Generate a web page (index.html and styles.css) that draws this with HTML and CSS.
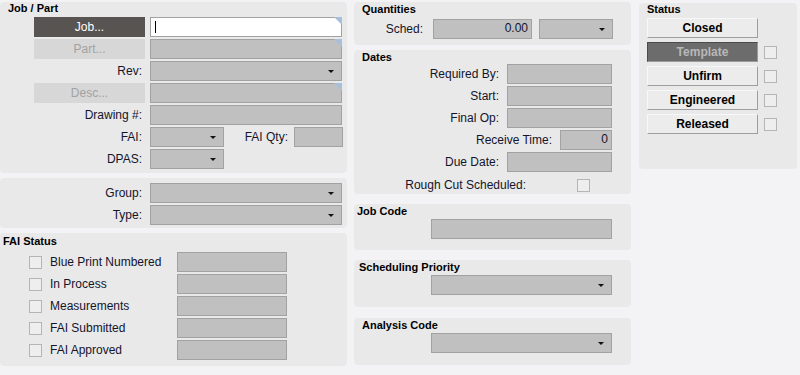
FILE: index.html
```html
<!DOCTYPE html>
<html>
<head>
<meta charset="utf-8">
<link rel="stylesheet" href="styles.css">
</head>
<body>
<div class="page">
  <div class="col col-left">
    <section class="panel p-job">
      <div class="ptitle">Job / Part</div>
      <div class="rows">
        <div class="row"><div class="lbl btn btn-dark">Job...</div><div class="field input white corner"><span class="caret"></span></div></div>
        <div class="row"><div class="lbl btn btn-dis">Part...</div><div class="field input corner"></div></div>
        <div class="row"><div class="lbl">Rev:</div><div class="field input dd"><span class="arrow"></span></div></div>
        <div class="row"><div class="lbl btn btn-dis">Desc...</div><div class="field input corner"></div></div>
        <div class="row"><div class="lbl">Drawing #:</div><div class="field input"></div></div>
        <div class="row"><div class="lbl">FAI:</div><div class="input dd w-fai"><span class="arrow"></span></div><div class="lbl-qty">FAI Qty:</div><div class="input w-qty"></div></div>
        <div class="row"><div class="lbl">DPAS:</div><div class="input dd w-fai"><span class="arrow"></span></div></div>
      </div>
    </section>
    <section class="panel p-group">
      <div class="rows">
        <div class="row"><div class="lbl">Group:</div><div class="field input dd"><span class="arrow"></span></div></div>
        <div class="row"><div class="lbl">Type:</div><div class="field input dd"><span class="arrow"></span></div></div>
      </div>
    </section>
    <section class="panel p-fai">
      <div class="ptitle">FAI Status</div>
      <div class="rows">
        <div class="frow"><span class="chk"></span><span class="flbl">Blue Print Numbered</span><div class="input w-fs"></div></div>
        <div class="frow"><span class="chk"></span><span class="flbl">In Process</span><div class="input w-fs"></div></div>
        <div class="frow"><span class="chk"></span><span class="flbl">Measurements</span><div class="input w-fs"></div></div>
        <div class="frow"><span class="chk"></span><span class="flbl">FAI Submitted</span><div class="input w-fs"></div></div>
        <div class="frow"><span class="chk"></span><span class="flbl">FAI Approved</span><div class="input w-fs"></div></div>
      </div>
    </section>
  </div>

  <div class="col col-mid">
    <section class="panel p-qty">
      <div class="ptitle t-indent">Quantities</div>
      <div class="row"><div class="mlbl w-sched">Sched:</div><div class="input num w-schedin">0.00</div><div class="input dd w-scheddd"><span class="arrow"></span></div></div>
    </section>
    <section class="panel p-dates">
      <div class="ptitle t-indent">Dates</div>
      <div class="rows">
        <div class="row"><div class="mlbl w-d">Required By:</div><div class="input w-din"></div></div>
        <div class="row"><div class="mlbl w-d">Start:</div><div class="input w-din"></div></div>
        <div class="row"><div class="mlbl w-d">Final Op:</div><div class="input w-din"></div></div>
        <div class="row"><div class="mlbl w-rt">Receive Time:</div><div class="input num w-rtin">0</div></div>
        <div class="row"><div class="mlbl w-d">Due Date:</div><div class="input w-din"></div></div>
        <div class="row row-rough"><div class="mlbl w-rc">Rough Cut Scheduled:</div><span class="chk chk-rc"></span></div>
      </div>
    </section>
    <section class="panel p-jc">
      <div class="ptitle t-jc">Job Code</div>
      <div class="row"><div class="input w-jc"></div></div>
    </section>
    <section class="panel p-sp">
      <div class="ptitle t-sp">Scheduling Priority</div>
      <div class="row"><div class="input dd w-jc"><span class="arrow"></span></div></div>
    </section>
    <section class="panel p-ac">
      <div class="ptitle t-indent">Analysis Code</div>
      <div class="row"><div class="input dd w-jc"><span class="arrow"></span></div></div>
    </section>
  </div>

  <div class="col col-right">
    <section class="panel p-status">
      <div class="ptitle t-status">Status</div>
      <div class="srow"><div class="sbtn">Closed</div></div>
      <div class="srow"><div class="sbtn sbtn-on">Template</div><span class="chk"></span></div>
      <div class="srow"><div class="sbtn">Unfirm</div><span class="chk"></span></div>
      <div class="srow s-gap"><div class="sbtn">Engineered</div><span class="chk"></span></div>
      <div class="srow s-gap"><div class="sbtn">Released</div><span class="chk"></span></div>
    </section>
  </div>
</div>
</body>
</html>
```

FILE: styles.css
```css
* { box-sizing: border-box; }
html, body {
  margin: 0;
  padding: 0;
}
body {
  width: 800px;
  height: 375px;
  overflow: hidden;
  background: #f3f3f5;
  font-family: "Liberation Sans", Arial, sans-serif;
  font-size: 12px;
  color: #14142c;
}
.page {
  display: flex;
  align-items: flex-start;
  padding-top: 2px;
}
.col { display: flex; flex-direction: column; }
.col-left { width: 347px; gap: 5px; }
.col-mid { width: 277px; margin-left: 7px; }
.col-right { width: 158px; margin-left: 8px; }

.panel {
  background: #e9e9e9;
  border-radius: 4px;
}
.ptitle {
  font-weight: bold;
  font-size: 11px;
  line-height: 13px;
  height: 13px;
  color: #000;
  padding-left: 4px;
}
.rows { display: flex; flex-direction: column; gap: 2px; }
.row { display: flex; align-items: center; height: 20px; }

/* left column */
.p-job { height: 171px; padding: 0 5px 0 34px; }
.p-job .ptitle { margin-left: -30px; margin-bottom: 2px; }
.p-group { height: 50px; padding: 5px 5px 0 34px; }
.p-fai { height: 133px; padding: 2px 0 0 0; }
.p-fai .ptitle { padding-left: 3px; margin-bottom: 4px; }

.lbl {
  width: 111px;
  height: 20px;
  line-height: 20px;
  text-align: right;
  padding-right: 3px;
  margin-right: 5px;
  flex: none;
}
.btn { text-align: center; padding-right: 0; }
.btn-dark { background: #585452; color: #fff; }
.btn-dis { background: #d7d7d7; color: #a2a2a2; }

.input {
  position: relative;
  height: 20px;
  background: #c0c0c0;
  border: 1px solid #a2a2a2;
  flex: none;
}
.white { background: #fff; }
.field { width: 192px; }
.corner::after {
  content: "";
  position: absolute;
  top: -1px;
  right: -1px;
  border-top: 8px solid #a8bfdc;
  border-left: 8px solid transparent;
}
.caret {
  position: absolute;
  left: 4px;
  top: 3px;
  width: 1px;
  height: 12px;
  background: #000;
}
.arrow {
  position: absolute;
  right: 7px;
  top: 8px;
  width: 0;
  height: 0;
  border-left: 3px solid transparent;
  border-right: 3px solid transparent;
  border-top: 3px solid #111;
}
.w-fai { width: 74px; }
.lbl-qty {
  width: 70px;
  text-align: right;
  padding-right: 6px;
  flex: none;
}
.w-qty { width: 49px; }

.frow { display: flex; align-items: center; height: 20px; padding-left: 29px; }
.chk {
  display: inline-block;
  width: 13px;
  height: 13px;
  background: #eeeeee;
  border: 1px solid #b5b5b5;
  flex: none;
}
.flbl { width: 127px; margin-left: 8px; flex: none; }
.w-fs { width: 110px; }

/* middle column */
.t-indent { padding-left: 8px; }
.p-qty { height: 43px; padding-top: 1px; }
.p-qty .ptitle { margin-bottom: 3px; }
.mlbl { text-align: right; flex: none; }
.w-sched { width: 69px; margin-right: 10px; }
.num { text-align: right; padding-right: 3px; line-height: 17px; }
.w-schedin { width: 99px; margin-right: 7px; }
.w-scheddd { width: 74px; }

.p-dates { margin-top: 5px; height: 144px; padding-top: 1px; }
.p-dates .ptitle { margin-bottom: 0; }
.w-d { width: 145px; margin-right: 8px; }
.w-din { width: 105px; }
.w-rt { width: 198px; margin-right: 8px; }
.w-rtin { width: 52px; }
.row-rough { margin-top: 1px; }
.w-rc { width: 172px; }
.chk-rc { margin-left: 51px; }

.p-jc { margin-top: 10px; height: 46px; padding-top: 1px; }
.t-jc { padding-left: 3px; margin-bottom: 1px; }
.w-jc { width: 181px; margin-left: 77px; }
.p-sp { margin-top: 10px; height: 47px; padding-top: 1px; }
.t-sp { padding-left: 5px; margin-bottom: 1px; }
.p-ac { margin-top: 11px; height: 47px; padding-top: 1px; }
.p-ac .ptitle { margin-bottom: 1px; }

/* right column */
.p-status { height: 166px; margin-top: 1px; padding: 0 0 0 8px; }
.t-status { padding-left: 0; margin-bottom: 2px; }
.srow { display: flex; align-items: center; height: 20px; margin-bottom: 4px; }
.s-gap { margin-top: 1px; }
.sbtn {
  width: 111px;
  height: 20px;
  line-height: 18px;
  text-align: center;
  font-weight: bold;
  color: #000;
  background: #ececec;
  border-top: 1px solid #f8f8f8;
  border-left: 1px solid #f8f8f8;
  border-right: 1px solid #9e9e9e;
  border-bottom: 1px solid #9e9e9e;
  margin-right: 6px;
  flex: none;
}
.sbtn-on {
  background: #6c6c6c;
  color: #b8b8b8;
  border-top: 1px solid #4a4a4a;
  border-left: 1px solid #4a4a4a;
  border-right: 1px solid #9a9a9a;
  border-bottom: 1px solid #9a9a9a;
}
```
